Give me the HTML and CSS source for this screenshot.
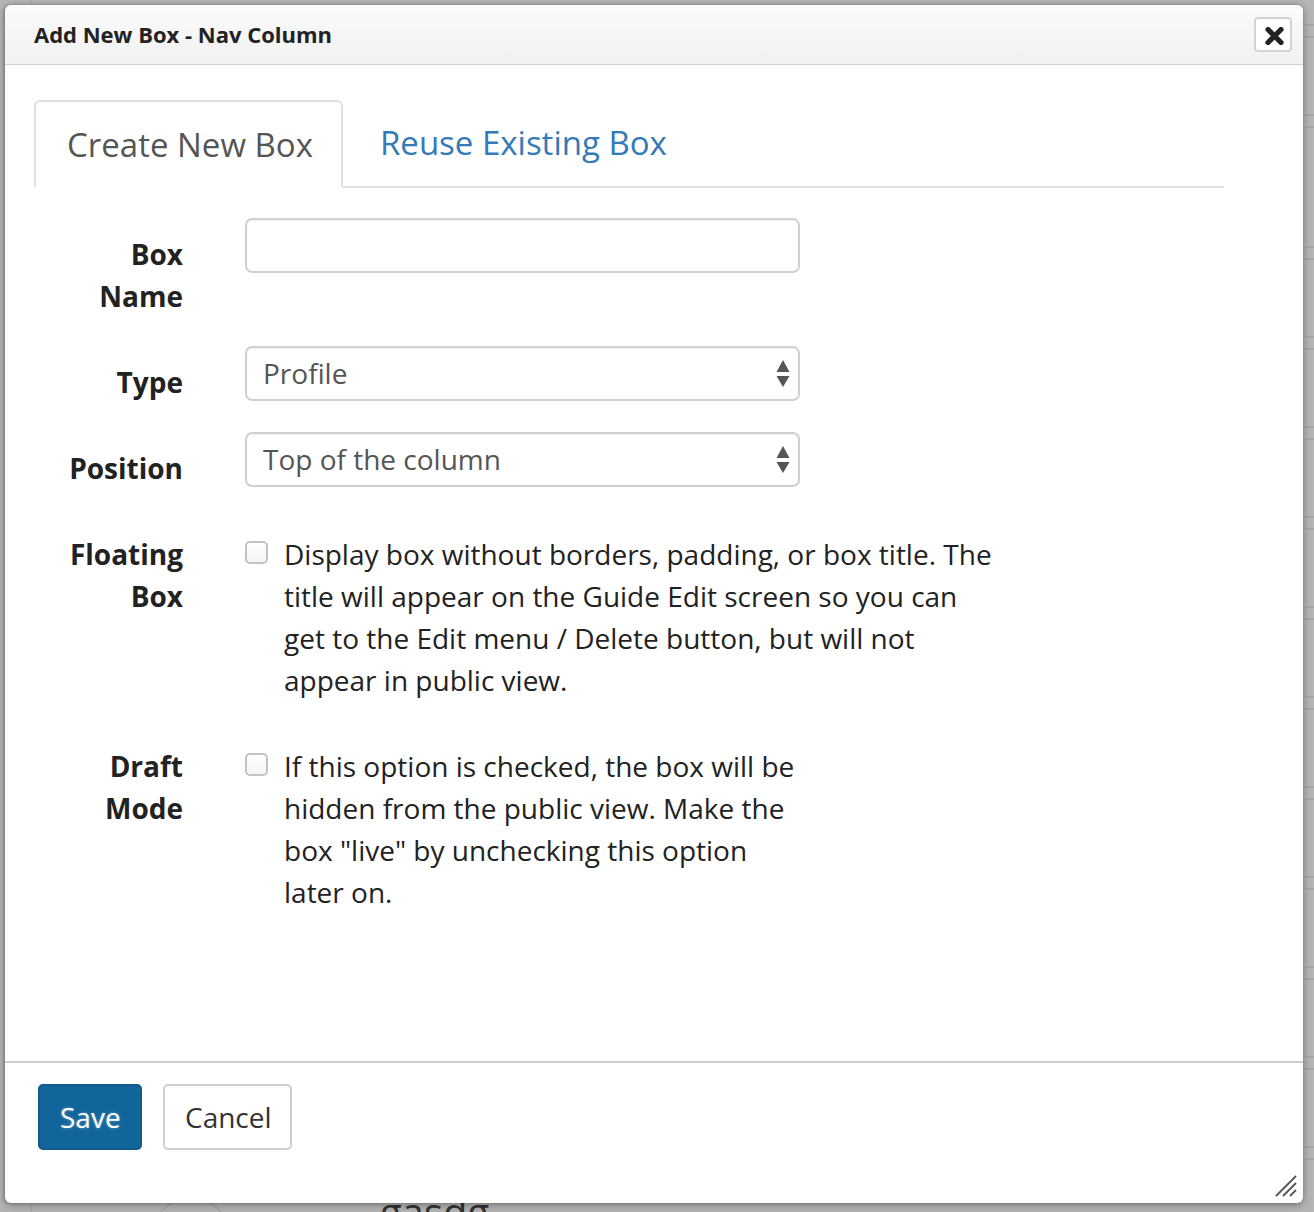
FILE: index.html
```html
<!DOCTYPE html>
<html>
<head>
<meta charset="utf-8">
<link rel="stylesheet" href="styles.css">
</head>
<body>
<div class="backdrop">
  <div class="bg-line"></div>
  <div class="bg-strip"></div>
  <div class="bg-bottom">
    <span class="bg-circle"></span>
    <span class="bg-text">gasdg</span>
  </div>
</div>

<div class="dialog">
  <div class="header">
    <h1 class="title">Add New Box - Nav Column</h1>
    <button class="close" aria-label="Close">
      <svg width="19" height="18" viewBox="0 0 19 18"><path d="M3 2.5 L16 15.5 M16 2.5 L3 15.5" stroke="#222" stroke-width="5.2" stroke-linecap="round"/></svg>
    </button>
  </div>

  <div class="body">
    <ul class="tabs">
      <li class="tab active">Create New Box</li>
      <li class="tab link">Reuse Existing Box</li>
    </ul>

    <form class="form">
      <div class="row">
        <label class="label">Box<br>Name</label>
        <div class="control"><input class="input" type="text"></div>
      </div>
      <div class="row">
        <label class="label">Type</label>
        <div class="control">
          <div class="select"><span>Profile</span><svg class="arrows" width="14" height="28" viewBox="0 0 14 28"><path d="M7 0 L13.5 12 L0.5 12 Z M0.5 16 L13.5 16 L7 27 Z" fill="#555"/></svg></div>
        </div>
      </div>
      <div class="row">
        <label class="label">Position</label>
        <div class="control">
          <div class="select"><span>Top of the column</span><svg class="arrows" width="14" height="28" viewBox="0 0 14 28"><path d="M7 0 L13.5 12 L0.5 12 Z M0.5 16 L13.5 16 L7 27 Z" fill="#555"/></svg></div>
        </div>
      </div>
      <div class="row">
        <label class="label">Floating<br>Box</label>
        <div class="check wide">
          <span class="box"></span>
          <p class="check-text">Display box without borders, padding, or box title. The title will appear on the Guide Edit screen so you can get to the Edit menu / Delete button, but will not appear in public view.</p>
        </div>
      </div>
      <div class="row">
        <label class="label">Draft<br>Mode</label>
        <div class="check narrow">
          <span class="box"></span>
          <p class="check-text">If this option is checked, the box will be hidden from the public view. Make the box "live" by unchecking this option later on.</p>
        </div>
      </div>
    </form>
  </div>

  <div class="footer">
    <button class="btn primary">Save</button>
    <button class="btn">Cancel</button>
    <svg class="grip" width="24" height="24" viewBox="0 0 24 24"><path d="M2 22 L22 2 M9 22 L22 9 M16 22 L22 16" stroke="#555" stroke-width="1.8"/></svg>
  </div>
</div>
</body>
</html>
```

FILE: styles.css
```css
html, body {
  margin: 0;
  padding: 0;
}
body {
  width: 1314px;
  height: 1212px;
  overflow: hidden;
  background: #b5b5b5;
  font-family: "Open Sans", "Noto Sans", sans-serif;
  color: #333;
  position: relative;
}

/* page behind the modal */
.backdrop {
  width: 1314px;
  height: 1212px;
  position: relative;
  overflow: hidden;
}
.bg-line {
  position: absolute;
  left: 31px;
  top: 0;
  width: 1px;
  height: 1212px;
  background: #a6a6a6;
}
.bg-strip {
  position: absolute;
  right: 0;
  top: 0;
  width: 9px;
  height: 1212px;
  background:
    repeating-linear-gradient(to bottom,
      transparent 0, transparent 66px,
      #a7a7a7 66px, #a7a7a7 68px,
      transparent 68px, transparent 78px,
      #a7a7a7 78px, #a7a7a7 80px,
      transparent 80px, transparent 90px);
  background-position: 0 180px;
}
.bg-bottom {
  position: absolute;
  left: 0;
  top: 1190px;
  width: 1314px;
  height: 22px;
  overflow: hidden;
}
.bg-circle {
  position: absolute;
  left: 150px;
  top: 8px;
  width: 80px;
  height: 80px;
  border: 1px solid #999;
  border-radius: 50%;
}
.bg-text {
  position: absolute;
  left: 380px;
  top: -2px;
  font-size: 40px;
  line-height: 48px;
  color: #333;
}

/* modal */
.dialog {
  position: absolute;
  left: 5px;
  top: 5px;
  width: 1298px;
  height: 1198px;
  background: #fff;
  border-radius: 6px;
  box-shadow: 0 2px 8px rgba(0,0,0,0.35), -1px 0 3px rgba(0,0,0,0.2);
  display: flex;
  flex-direction: column;
  overflow: hidden;
}
.header {
  height: 59px;
  flex: none;
  border-bottom: 1px solid #cfcfcf;
  background: linear-gradient(#fbfbfb, #f1f1f1);
  display: flex;
  align-items: center;
  justify-content: space-between;
  padding: 0 11px 0 29px;
  border-radius: 6px 6px 0 0;
}
.title {
  margin: 0;
  font-size: 22px;
  font-weight: 700;
  color: #222;
  margin-top: -2px;
}
.close {
  width: 38px;
  height: 35px;
  margin-top: -1px;
  border: 2px solid #d3d3d3;
  border-radius: 4px;
  background: #fff;
  padding: 0;
  display: flex;
  align-items: center;
  justify-content: center;
}
.close svg { margin-top: 4px; margin-left: 2px; }

.body {
  flex: 1;
  padding: 35px 79px 0 29px;
}
.tabs {
  list-style: none;
  margin: 0;
  padding: 0;
  display: flex;
  gap: 6px;
  border-bottom: 2px solid #e2e2e2;
}
.tab {
  font-size: 33px;
  height: 84px;
  line-height: 86px;
  padding: 0 28px 0 31px;
  margin-bottom: -2px;
}
.tab.active {
  color: #555;
  border: 2px solid #e0e0e0;
  border-bottom: 2px solid #fff;
  border-radius: 6px 6px 0 0;
  background: #fff;
}
.tab.link {
  color: #337ab7;
}

.form {
  margin-top: 30px;
  display: flex;
  flex-direction: column;
  gap: 29px;
}
.row {
  display: grid;
  grid-template-columns: 149px auto;
  column-gap: 62px;
  align-items: start;
}
.label {
  text-align: right;
  font-size: 28px;
  font-weight: 700;
  color: #222;
  line-height: 42px;
  padding-top: 15px;
}
.control {
  width: 555px;
}
.input, .select {
  box-sizing: border-box;
  width: 555px;
  height: 55px;
  border: 2px solid #d0d0d0;
  border-radius: 7px;
  background: #fff;
  box-shadow: inset 0 1px 2px rgba(0,0,0,0.06);
  font-family: inherit;
  font-size: 28px;
}
.input { display: block; margin: 0; outline: none; }
.select {
  display: flex;
  align-items: center;
  justify-content: space-between;
  padding: 0 8px 0 16px;
  color: #555;
}
.select span { margin-top: -2px; }
.arrows { margin-top: 1px; }

.check {
  display: flex;
  align-items: flex-start;
  gap: 16px;
  padding-top: 15px;
}
.check.wide { width: 755px; }
.check.narrow { width: 555px; }
.box {
  flex: none;
  box-sizing: border-box;
  width: 23px;
  height: 23px;
  margin-top: 8px;
  border: 2px solid #c3c3c3;
  border-radius: 5px;
  background: linear-gradient(#fff, #f4f4f4);
}
.check-text {
  margin: 0;
  font-size: 28px;
  line-height: 42px;
  color: #222;
}

.footer {
  flex: none;
  box-sizing: border-box;
  height: 142px;
  border-top: 2px solid #cfcfcf;
  display: flex;
  align-items: flex-start;
  gap: 21px;
  padding: 21px 0 0 33px;
  position: relative;
}
.btn {
  height: 66px;
  padding: 0 20px;
  font-family: inherit;
  font-size: 28px;
  border-radius: 5px;
  border: 2px solid #cfcfcf;
  background: #fff;
  color: #333;
}
.btn.primary {
  width: 104px;
  background: #12659a;
  border-color: #0f5b8b;
  color: #fff;
  text-shadow: 0 0 3px rgba(255,255,255,0.4);
}
.btn:not(.primary) { width: 129px; }
.grip {
  position: absolute;
  right: 5px;
  bottom: 5px;
}
```
